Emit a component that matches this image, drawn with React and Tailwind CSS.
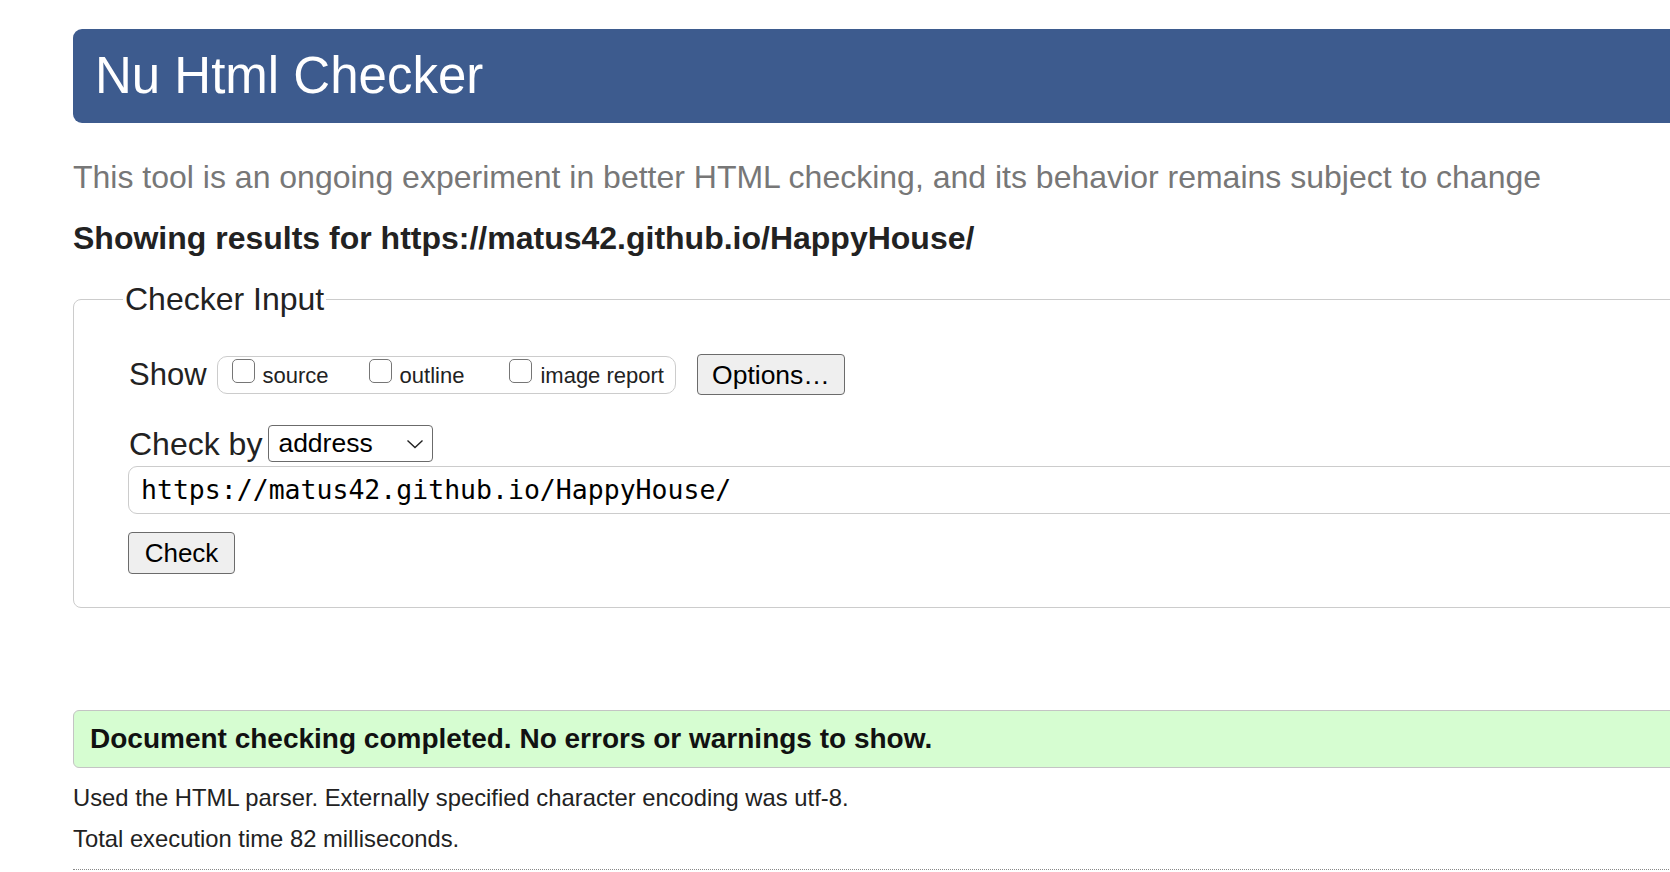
import React from "react";

function Box() {
  return <span className="inline-block w-[23px] h-[24px] rounded-[5px] border-[1.5px] border-[#767676] bg-white shrink-0" />;
}

export default function App() {
  return (
    <div className="w-full h-[872px] overflow-hidden bg-white font-['Liberation_Sans',Arial,sans-serif] text-[#222]">
      <div className="ml-[73px] w-[1700px] pt-[29px]">
        <h1 className="h-[94px] rounded-[9px] bg-[#3d5b8e] text-white text-[51px] leading-[94px] pl-[22px]">
          Nu Html Checker
        </h1>
        <p className="mt-[36px] text-[32px] leading-[37px] text-[#777]">
          This tool is an ongoing experiment in better HTML checking, and its behavior remains subject to change
        </p>
        <p className="mt-[24px] text-[32px] leading-[37px] font-bold text-[#222]">
          Showing results for https://matus42.github.io/HappyHouse/
        </p>
        <fieldset className="mt-[24px] border border-[#ccc] rounded-[8px] pl-[55px] pb-[33px] pt-0">
          <legend className="ml-[-6px] px-[2px] text-[32px] leading-[36px] text-[#222]">Checker Input</legend>
          <div className="mt-[37px] h-[41px] flex items-center">
            <span className="text-[31px] leading-[36px]">Show</span>
            <div className="ml-[10px] h-[38px] flex items-baseline rounded-[10px] border border-[#ccc] pl-[14px] pr-[11px] pt-[2px] text-[22px] leading-[26px]">
              <Box />
              <span className="ml-[8px]">source</span>
              <span className="ml-[40px]"><Box /></span>
              <span className="ml-[8px]">outline</span>
              <span className="ml-[45px]"><Box /></span>
              <span className="ml-[8px]">image report</span>
            </div>
            <button className="ml-[21px] h-[41px] w-[148px] rounded-[4px] border border-[#6b6b6b] bg-[#efefef] text-[26.5px] leading-[30px] text-black">
              Options…
            </button>
          </div>
          <div className="mt-[30px] h-[37px] flex items-center">
            <span className="text-[32px] leading-[36px]">Check by</span>
            <div className="ml-[6px] h-[37px] w-[165px] flex items-center justify-between rounded-[4px] border border-[#6b6b6b] bg-white pl-[9px] pr-[8px] text-[26.5px] text-black">
              <span>address</span>
              <svg width="18" height="10" viewBox="0 0 18 10" fill="none" stroke="#222" strokeWidth="1.4">
                <path d="M1.5 1.5 L9 8.5 L16.5 1.5" />
              </svg>
            </div>
          </div>
          <div className="mt-[4px] ml-[-1px] h-[48px] rounded-[9px] border border-[#ccc] flex items-center pl-[12px] font-['DejaVu_Sans_Mono',Menlo,monospace] text-[26.5px] text-black">
            https://matus42.github.io/HappyHouse/
          </div>
          <button className="mt-[18px] ml-[-1px] h-[42px] w-[107px] rounded-[4px] border border-[#6b6b6b] bg-[#efefef] text-[26px] leading-[30px] text-black">
            Check
          </button>
        </fieldset>
        <div className="mt-[102px] h-[58px] rounded-[6px] border border-[#c4c4c4] bg-[#d6fdd1] flex items-center pl-[16px] text-[28px] font-bold text-[#111]">
          Document checking completed. No errors or warnings to show.
        </div>
        <p className="mt-[16px] text-[23.8px] leading-[28px]">
          Used the HTML parser. Externally specified character encoding was utf-8.
        </p>
        <p className="mt-[13px] text-[23.8px] leading-[28px]">Total execution time 82 milliseconds.</p>
        <div className="mt-[16px] border-t border-dotted border-[#888]" />
      </div>
    </div>
  );
}
